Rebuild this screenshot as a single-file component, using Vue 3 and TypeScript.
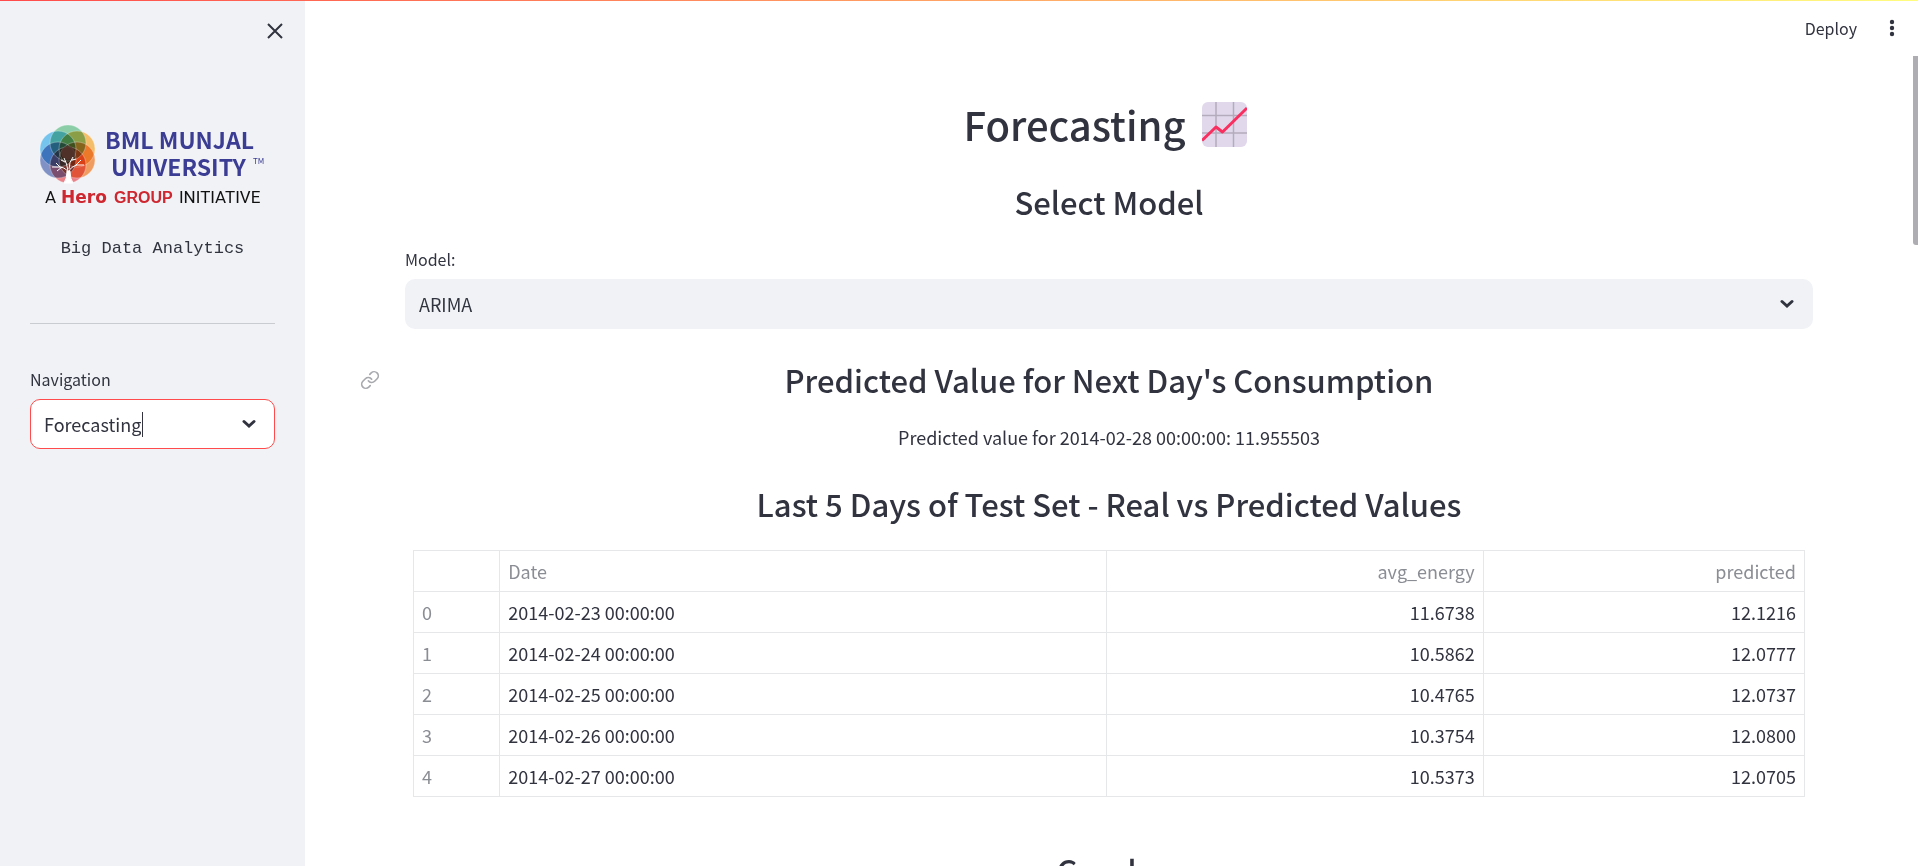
<script setup lang="ts">
import { ref } from 'vue'

interface ForecastRow {
  date: string
  real: string
  predicted: string
}

const page = ref('Forecasting')
const model = ref('ARIMA')

const rows: ForecastRow[] = [
  { date: '2014-02-23 00:00:00', real: '11.6738', predicted: '12.1216' },
  { date: '2014-02-24 00:00:00', real: '10.5862', predicted: '12.0777' },
  { date: '2014-02-25 00:00:00', real: '10.4765', predicted: '12.0737' },
  { date: '2014-02-26 00:00:00', real: '10.3754', predicted: '12.0800' },
  { date: '2014-02-27 00:00:00', real: '10.5373', predicted: '12.0705' },
]

// Petals of the emblem, laid out around a ring
const petals = [
  { x: 38, y: 28, color: '#5fbd86' },
  { x: 47, y: 34, color: '#f5a62a' },
  { x: 28, y: 34, color: '#3fb0ea' },
  { x: 47, y: 45, color: '#ef7722' },
  { x: 28, y: 45, color: '#4f68b0' },
  { x: 38, y: 50, color: '#e4525a' },
]
</script>

<template>
  <div class="app">
    <aside class="sidebar">
      <button class="close" type="button" aria-label="Close sidebar">
        <svg width="16" height="16" viewBox="0 0 16 16"><path d="M1 1l14 14M15 1l-14 14" /></svg>
      </button>

      <svg class="logo" viewBox="0 0 245 96" role="img" aria-label="BML Munjal University">
        <g class="petals">
          <circle v-for="p in petals" :key="p.color" :cx="p.x" :cy="p.y" r="18" :fill="p.color" />
        </g>
        <g class="outlines">
          <circle v-for="p in petals" :key="p.color" :cx="p.x" :cy="p.y" r="18" />
        </g>
        <circle cx="38" cy="38" r="7" fill="#54342c" opacity="0.9" />
        <g class="tree">
          <path d="M34 68q3-4 3-12h3q0 8 3 12z" class="trunk" />
          <path d="M38 58q-1-5-8-6l-8 0M39 57q1-5 8-7l7 0M30 52l-4-4M32 52l-5 4M46 50l5-5M38 56q-1-8-4-13M39 54q0-7 4-12M35 47l-4-2M42 45l4-1" />
        </g>
        <text class="brand" x="75" y="34">BML MUNJAL</text>
        <text class="brand" x="81" y="61">UNIVERSITY</text>
        <text class="tm" x="223" y="49">TM</text>
        <text class="tag" x="15" y="88">A</text>
        <text class="hero" x="31" y="88">Hero</text>
        <text class="group" x="84" y="88">GROUP</text>
        <text class="tag" x="149" y="88">INITIATIVE</text>
      </svg>

      <p class="course">Big Data Analytics</p>
      <hr class="rule" />

      <label class="label" for="navigation">Navigation</label>
      <div class="box focused">
        <input id="navigation" v-model="page" class="combo" type="text" role="combobox" aria-expanded="false" />
        <span class="caret"></span>
        <svg class="chevron" width="14" height="10" viewBox="0 0 14 10"><path d="M2 2.500L7 7l5-4.500" /></svg>
      </div>
    </aside>

    <main class="main">
      <header class="toolbar">
        <button class="deploy" type="button">Deploy</button>
        <button class="menu" type="button" aria-label="Main menu">
          <svg width="6" height="18" viewBox="0 0 6 18">
            <circle cx="3" cy="3" r="2.200" /><circle cx="3" cy="9" r="2.200" /><circle cx="3" cy="15" r="2.200" />
          </svg>
        </button>
      </header>

      <div class="content">
        <h1 class="title">
          Forecasting
          <svg class="emoji" width="45" height="45" viewBox="0 0 45 45">
            <rect width="45" height="45" rx="6" fill="#e1d8ec" />
            <path d="M14 0v45M31.500 0v45M0 13.500h45M0 31h45" stroke="#b4acbc" stroke-width="1.500" />
            <path d="M0 38.500L14 25l6.500 5L45 6" fill="none" stroke="#f92f60" stroke-width="3" stroke-linejoin="round" />
          </svg>
        </h1>
        <h2 class="heading first">Select Model</h2>

        <label class="label" for="model">Model:</label>
        <div class="box">
          <select id="model" v-model="model" class="select">
            <option>ARIMA</option>
          </select>
          <svg class="chevron" width="14" height="10" viewBox="0 0 14 10"><path d="M2 2.500L7 7l5-4.500" /></svg>
        </div>

        <h2 class="heading">
          <a class="anchor" href="#predicted" aria-label="Link to section">
            <svg width="20" height="20" viewBox="0 0 24 24">
              <path d="M10 13a5 5 0 0 0 7.540.540l3-3a5 5 0 0 0-7.070-7.070l-1.720 1.710" />
              <path d="M14 11a5 5 0 0 0-7.540-.540l-3 3a5 5 0 0 0 7.070 7.070l1.710-1.710" />
            </svg>
          </a>
          Predicted Value for Next Day's Consumption
        </h2>
        <p class="result">Predicted value for 2014-02-28 00:00:00: 11.955503</p>

        <h2 class="heading">Last 5 Days of Test Set - Real vs Predicted Values</h2>
        <div class="table-wrap">
          <table class="table">
            <colgroup><col class="c-index" /><col class="c-date" /><col class="c-real" /><col /></colgroup>
            <thead>
              <tr>
                <th></th>
                <th scope="col">Date</th>
                <th scope="col" class="num">avg_energy</th>
                <th scope="col" class="num">predicted</th>
              </tr>
            </thead>
            <tbody>
              <tr v-for="(row, i) in rows" :key="row.date">
                <th scope="row">{{ i }}</th>
                <td>{{ row.date }}</td>
                <td class="num">{{ row.real }}</td>
                <td class="num">{{ row.predicted }}</td>
              </tr>
            </tbody>
          </table>
        </div>

        <h2 class="heading">Graphs</h2>
      </div>
      <div class="thumb"></div>
    </main>
    <div class="stripe"></div>
  </div>
</template>

<style>
body {
  margin: 0;
  overflow: hidden;
}
</style>

<style scoped>
.app {
  position: relative;
  display: flex;
  height: 100vh;
  overflow: hidden;
  background: #fff;
  color: #31333f;
  font-family: "Noto Sans CJK JP", "Noto Sans CJK SC", "Open Sans", sans-serif;
  font-size: 18px;
  line-height: 32px;
}
.app * {
  box-sizing: border-box;
}
button {
  border: 0;
  padding: 0;
  background: none;
  color: inherit;
  font: inherit;
  cursor: pointer;
}
.stripe {
  position: absolute;
  top: 0;
  left: 0;
  right: 0;
  height: 1px;
  background: linear-gradient(90deg, #ff4b4b, #fffd80);
}
.sidebar {
  display: flex;
  flex-direction: column;
  flex: none;
  width: 305px;
  padding: 20px 30px;
  background: #f0f2f6;
}
.close {
  display: flex;
  align-self: flex-end;
  margin-right: -8px;
  padding: 3px 0;
}
.close svg {
  fill: none;
  stroke: #31333f;
  stroke-width: 2;
}
.logo {
  width: 100%;
  margin-top: 73px;
}
.petals {
  isolation: isolate;
}
.petals circle {
  mix-blend-mode: multiply;
  opacity: 0.7;
}
.outlines circle {
  fill: none;
  stroke: #fff;
  stroke-opacity: 0.3;
}
.tree path {
  fill: none;
  stroke: #fff;
}
.tree .trunk {
  fill: #fff;
}
.brand {
  fill: #3b3c93;
  font-size: 23px;
  font-weight: 700;
}
.tm {
  fill: #3b3c93;
  font-size: 8px;
}
.tag {
  fill: #111;
  font-family: Roboto, sans-serif;
  font-size: 17px;
}
.group,
.hero {
  fill: #cf2730;
  font-family: "DejaVu Sans", sans-serif;
  font-size: 17px;
  font-weight: 700;
}
.group {
  font-family: "Liberation Sans", sans-serif;
  font-size: 16px;
}
.course {
  margin: 22px 0 0;
  font-family: "Liberation Mono", monospace;
  font-size: 17px;
  text-align: center;
}
.rule {
  width: 100%;
  margin: 58px 0 43px;
  border: 0;
  border-top: 1px solid #c9ccd1;
}
.label {
  display: block;
  margin-bottom: 8px;
  font-size: 16px;
  line-height: 24px;
}
.box {
  position: relative;
  display: flex;
  align-items: center;
  height: 50px;
  padding: 0 14px;
  border-radius: 10px;
  background: #f0f2f6;
}
.focused {
  padding: 0 13px;
  border: 1px solid #ff4b4b;
  background: #fff;
}
.combo {
  field-sizing: content;
  padding: 0;
  border: 0;
  outline: 0;
  background: none;
  color: inherit;
  font: inherit;
}
.caret {
  width: 1px;
  height: 25px;
  margin-left: 1px;
  background: #31333f;
}
.select {
  width: 100%;
  height: 100%;
  padding: 0;
  border: 0;
  outline: 0;
  background: none;
  color: inherit;
  font: inherit;
  appearance: none;
}
.chevron {
  flex: none;
  margin-left: auto;
  margin-right: 5px;
  fill: none;
  stroke: #31333f;
  stroke-width: 3;
  stroke-linecap: round;
  pointer-events: none;
}
.main {
  position: relative;
  flex: 1;
  min-width: 0;
}
.toolbar {
  display: flex;
  align-items: center;
  justify-content: flex-end;
  gap: 32px;
  height: 56px;
  padding: 0 23px;
}
.deploy {
  font-size: 16px;
}
.menu {
  display: flex;
}
.menu svg {
  fill: #31333f;
}
.content {
  padding: 41px 105px 0 100px;
}
.title {
  display: flex;
  align-items: center;
  justify-content: center;
  gap: 16px;
  margin: 0;
  padding-right: 8px;
  font-size: 40px;
  font-weight: 500;
  line-height: 54px;
}
.heading {
  position: relative;
  margin: 32px 0 22px;
  font-size: 31px;
  font-weight: 500;
  line-height: 38px;
  text-align: center;
}
.first {
  margin: 32px 0 26px;
}
.anchor {
  position: absolute;
  top: 50%;
  right: 100%;
  display: flex;
  margin: -10px 25px 0 0;
}
.anchor svg {
  fill: none;
  stroke: #a8a9ad;
  stroke-width: 2;
  stroke-linecap: round;
  stroke-linejoin: round;
}
.result {
  margin: 0;
  text-align: center;
}
.table-wrap {
  margin: 27px 0 54px;
  padding: 0 8px;
}
.table {
  width: 100%;
  table-layout: fixed;
  border-collapse: collapse;
}
.c-index {
  width: 6.2%;
}
.c-date {
  width: 43.6%;
}
.c-real {
  width: 27.1%;
}
th,
td {
  height: 41px;
  padding: 0 8px;
  border: 1px solid #e6e7e9;
  font-weight: 400;
  text-align: left;
}
th {
  color: #8b8d95;
}
.num {
  text-align: right;
}
.thumb {
  position: absolute;
  top: 56px;
  right: 0;
  width: 5px;
  height: 189px;
  border-radius: 0 0 0 3px;
  background: #adadb2;
}
</style>
